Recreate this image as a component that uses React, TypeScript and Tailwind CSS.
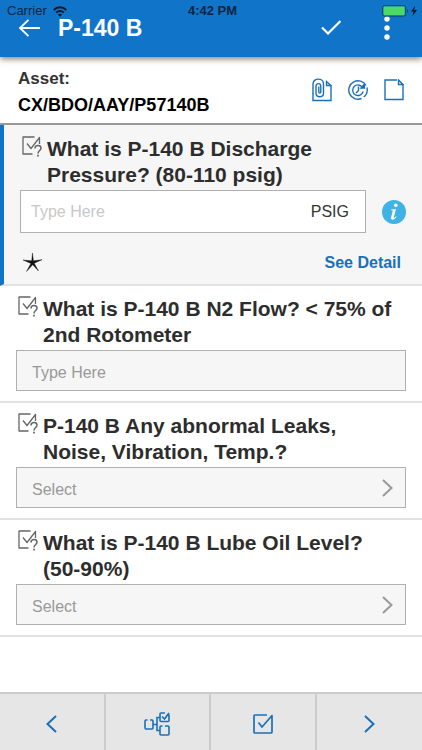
import type { ReactNode } from 'react';

interface Question {
  id: string;
  title: string;
  type: 'text' | 'select';
}

const questions: Question[] = [
  { id: 'flow', title: 'What is P-140 B N2 Flow? < 75% of 2nd Rotometer', type: 'text' },
  { id: 'leaks', title: 'P-140 B Any abnormal Leaks, Noise, Vibration, Temp.?', type: 'select' },
  { id: 'oil', title: 'What is P-140 B Lube Oil Level? (50-90%)', type: 'select' },
];

function QuestionIcon() {
  return (
    <svg width="20" height="21" viewBox="0 0 20 21" fill="none" stroke="#666" strokeWidth="1.3" strokeLinejoin="round">
      <path d="M12.500 1H1v17h9.500M17.500 8V1.500L9 12.500L5 7.500" />
      <path d="M13 12.500c0-4 6-3.700 6-.3 0 2.300-3 2.300-3 5.300" strokeWidth="1.5" />
      <path d="M16 18.800v1.700" strokeWidth="1.7" />
    </svg>
  );
}

function Chevron({ left = false }: { left?: boolean }) {
  return (
    <svg width="11" height="18" viewBox="0 0 11 18" fill="none" stroke="currentColor" strokeWidth="2">
      <path d={left ? 'M10 1L1.500 9L10 17' : 'M1 1l8.500 8L1 17'} />
    </svg>
  );
}

function QuestionTitle({ id, children }: { id: string; children: ReactNode }) {
  return (
    <label htmlFor={id} className="flex gap-[5px] pr-2 pl-0.5 text-[21px] leading-[26px] font-bold text-[#2d2d2d]">
      <span className="w-5 shrink-0">
        <QuestionIcon />
      </span>
      <span className="flex-1">{children}</span>
    </label>
  );
}

function StatusBar() {
  return (
    <div className="absolute inset-x-0 top-0 grid h-[22px] grid-cols-3 items-center pr-1 pl-[7px] text-[13px] leading-[22px] text-[#0b2540]">
      <div className="flex items-center gap-1.5">
        <span>Carrier</span>
        <svg width="14" height="11" viewBox="0 0 14 11" fill="none" stroke="#08192b" strokeWidth="2">
          <path d="M.8 4C4.300.4 9.700.4 13.200 4" />
          <path d="M3.200 6.600c2.200-2.200 5.400-2.200 7.600 0" />
          <path d="M7 10.800L4.900 8.600c1.200-1.100 3-1.100 4.200 0z" fill="#08192b" stroke="none" />
        </svg>
      </div>
      <span className="text-center font-bold">4:42 PM</span>
      <svg width="36" height="12" viewBox="0 0 36 12" className="justify-self-end">
        <rect x=".6" y=".6" width="23" height="10.5" rx="2" fill="none" stroke="#0b4674" />
        <rect x="1.5" y="1.5" width="21.2" height="8.7" rx="1" fill="#4cd964" />
        <path d="M25 4v4c1.600-.6 1.600-3.400 0-4z" fill="#0b4674" />
        <path d="M33 1l-4 5.500h2.500L30.500 11l4.500-6h-2.700z" fill="#08192b" />
      </svg>
    </div>
  );
}

function Header() {
  return (
    <header className="relative z-10 bg-[#1074c9] pt-3.5 pb-[15px] shadow-[0_2px_6px_rgba(0,0,0,0.5)]">
      <StatusBar />
      <div className="flex h-7 items-center pr-6 pl-[18px] text-white">
        <button type="button" aria-label="Back" className="mr-[18px]">
          <svg width="22" height="18" viewBox="0 0 22 18" fill="none" stroke="currentColor" strokeWidth="1.8">
            <path d="M22 9H2M10.500 .8L2 9l8.500 8.200" />
          </svg>
        </button>
        <h1 className="flex-1 text-[23px] leading-7 font-bold">P-140 B</h1>
        <button type="button" aria-label="Save" className="mr-[43px]">
          <svg width="20" height="16" viewBox="0 0 20 16" fill="none" stroke="currentColor" strokeWidth="2.2">
            <path d="M1 7.500l6 6L19.500 1" />
          </svg>
        </button>
        <button type="button" aria-label="More" className="pr-2">
          <svg width="6" height="24" viewBox="0 0 6 24" fill="currentColor">
            <circle cx="3" cy="3" r="2.7" />
            <circle cx="3" cy="12" r="2.7" />
            <circle cx="3" cy="21" r="2.7" />
          </svg>
        </button>
      </div>
    </header>
  );
}

function AssetBar() {
  return (
    <section className="flex items-start justify-between border-b-2 border-[#999] pt-[9px] pr-[18px] pb-[5px] pl-[18px] shadow-[0_1px_2px_rgba(0,0,0,0.3)]">
      <div className="leading-[26px] font-bold">
        <p className="text-[17px] text-[#333]">Asset:</p>
        <p className="text-[18px] text-black">CX/BDO/AAY/P57140B</p>
      </div>
      <div className="flex items-center gap-4 pt-3 text-[#1a70b8]">
        <button type="button" aria-label="Attachments">
          <svg width="20" height="24" viewBox="0 0 20 24" fill="none" stroke="currentColor" strokeWidth="1.4">
            <path d="M1 15.500V22.500h18V8M14.500 3.500V7.500H19z" />
            <path d="M1 16V6C1-.5 11.500-.5 11.500 6v9c0 5-7.500 5-7.500 0V8.500c0-3.800 4.800-3.800 4.800 0V14c0 1.500-2 1.500-2 0V8.500" />
          </svg>
        </button>
        <button type="button" aria-label="History">
          <svg width="20" height="20" viewBox="0 0 20 20" fill="none" stroke="currentColor" strokeWidth="1.4">
            <path d="M13.500 18.500A9.200 9.200 0 1 1 18 5.500M18.900 7.500a9.200 9.200 0 0 1-3.200 9.500" />
            <path d="M14.500 7.500a5.300 5.300 0 1 0 .6 4M10.500 6.500v4L8 13" />
            <path d="M13 8h3.500l-.3-3.500z" fill="currentColor" />
          </svg>
        </button>
        <button type="button" aria-label="Notes">
          <svg width="20" height="22" viewBox="0 0 20 22" fill="none" stroke="currentColor" strokeWidth="1.4">
            <path d="M13 1H1v19.500h18V5.500" />
            <path d="M14.500 1V5.500H19z" />
          </svg>
        </button>
      </div>
    </section>
  );
}

function ActiveQuestion() {
  return (
    <section className="border-b-2 border-l-4 border-b-[#e2e2e2] border-l-[#1074c9] bg-[#f6f6f6] pt-[11px] pr-4 pl-4">
      <QuestionTitle id="pressure">What is P-140 B Discharge Pressure? (80-110 psig)</QuestionTitle>
      <div className="mt-0.5 flex items-center gap-4">
        <div className="flex h-[43px] flex-1 items-center border border-[#b0b0b0] bg-white pr-4 pl-2.5">
          <input
            id="pressure"
            type="text"
            placeholder="Type Here"
            className="min-w-0 flex-1 text-base outline-none placeholder:text-[#c8c8c8]"
          />
          <span className="text-base text-[#333]">PSIG</span>
        </div>
        <button type="button" aria-label="Information">
          <svg width="24" height="24" viewBox="0 0 24 24">
            <circle cx="12" cy="12" r="12" fill="#3fb2e6" />
            <circle cx="13.8" cy="5.2" r="1.8" fill="#fff" />
            <path d="M9 9.500c2-.2 3.500-.4 5-.6l-2.200 8.300c-.3 1.300.8.8 2.200-.9l.6.5c-2.300 3.700-6.300 3.900-5.500.5l1.500-5.500c.3-1.200 0-1.500-1.600-1.500z" fill="#fff" />
          </svg>
        </button>
      </div>
      <div className="flex h-[51px] items-center justify-between pt-2 pr-[5px] pl-[3px]">
        <svg width="20" height="20" viewBox="0 0 20 20" fill="#111" stroke="#111" strokeWidth=".4">
          <path d="M9.500 0l.9 7.800L19 6.700l-7.800 3.500L15.500 18l-5.800-6.300L3.500 18.500l4.400-8.100L0 7l8.700.8z" />
        </svg>
        <a href="#detail" className="text-base font-bold text-[#1a70b8]">See Detail</a>
      </div>
    </section>
  );
}

function QuestionCard({ question }: { question: Question }) {
  return (
    <section className="border-b-2 border-[#e2e2e2] px-4 py-2.5">
      <QuestionTitle id={question.id}>{question.title}</QuestionTitle>
      {question.type === 'text' ? (
        <input
          id={question.id}
          type="text"
          placeholder="Type Here"
          className="mt-0.5 block h-[41px] w-full border border-[#b0b0b0] bg-[#f6f6f6] px-[15px] pt-1 text-base outline-none placeholder:text-[#999]"
        />
      ) : (
        <div className="relative mt-0.5">
          <select
            id={question.id}
            defaultValue=""
            className="block h-[41px] w-full appearance-none border border-[#b0b0b0] bg-[#f6f6f6] px-[15px] pt-1 text-base text-[#999] outline-none"
          >
            <option value="">Select</option>
          </select>
          <span className="pointer-events-none absolute inset-y-0 right-[13px] flex items-center text-[#999]">
            <Chevron />
          </span>
        </div>
      )}
    </section>
  );
}

function Footer() {
  const buttonClass = 'flex items-center justify-center pt-1';

  return (
    <footer className="mt-auto grid h-[58px] grid-cols-4 divide-x-2 divide-[#ccc] border-t-2 border-[#ccc] bg-[#e6e6e6] text-[#1a70b8]">
      <button type="button" aria-label="Previous" className={buttonClass}>
        <Chevron left />
      </button>
      <button type="button" aria-label="Hierarchy" className={buttonClass}>
        <svg width="26" height="24" viewBox="0 0 26 24" fill="none" stroke="currentColor" strokeWidth="1.6">
          <path d="M3.500 8H2a1 1 0 0 0-1 1v7a1 1 0 0 0 1 1h6a1 1 0 0 0 1-1V9a1 1 0 0 0-1-1H6" />
          <path d="M9 12.500h4M16 5.500h-3v13h3" />
          <path d="M21 1h-4a1 1 0 0 0-1 1v6.500a1 1 0 0 0 1 1h7a1 1 0 0 0 1-1V2.500M18 4.500l2.500 2.500L25 1" />
          <path d="M18.500 14H17a1 1 0 0 0-1 1v7a1 1 0 0 0 1 1h7a1 1 0 0 0 1-1v-7a1 1 0 0 0-1-1h-3" />
        </svg>
      </button>
      <button type="button" aria-label="Checklist" className={buttonClass}>
        <svg width="20" height="20" viewBox="0 0 20 20" fill="none" stroke="currentColor" strokeWidth="1.7" strokeLinejoin="round">
          <path d="M14 1H2a1 1 0 0 0-1 1v16a1 1 0 0 0 1 1h16a1 1 0 0 0 1-1V1.500L9 13L5.500 8.500" />
        </svg>
      </button>
      <button type="button" aria-label="Next" className={buttonClass}>
        <Chevron />
      </button>
    </footer>
  );
}

export default function App() {
  return (
    <div className="flex min-h-screen flex-col bg-white font-['Liberation_Sans',Arial,sans-serif]">
      <Header />
      <AssetBar />
      <main>
        <ActiveQuestion />
        {questions.map(question => (
          <QuestionCard key={question.id} question={question} />
        ))}
      </main>
      <Footer />
    </div>
  );
}
